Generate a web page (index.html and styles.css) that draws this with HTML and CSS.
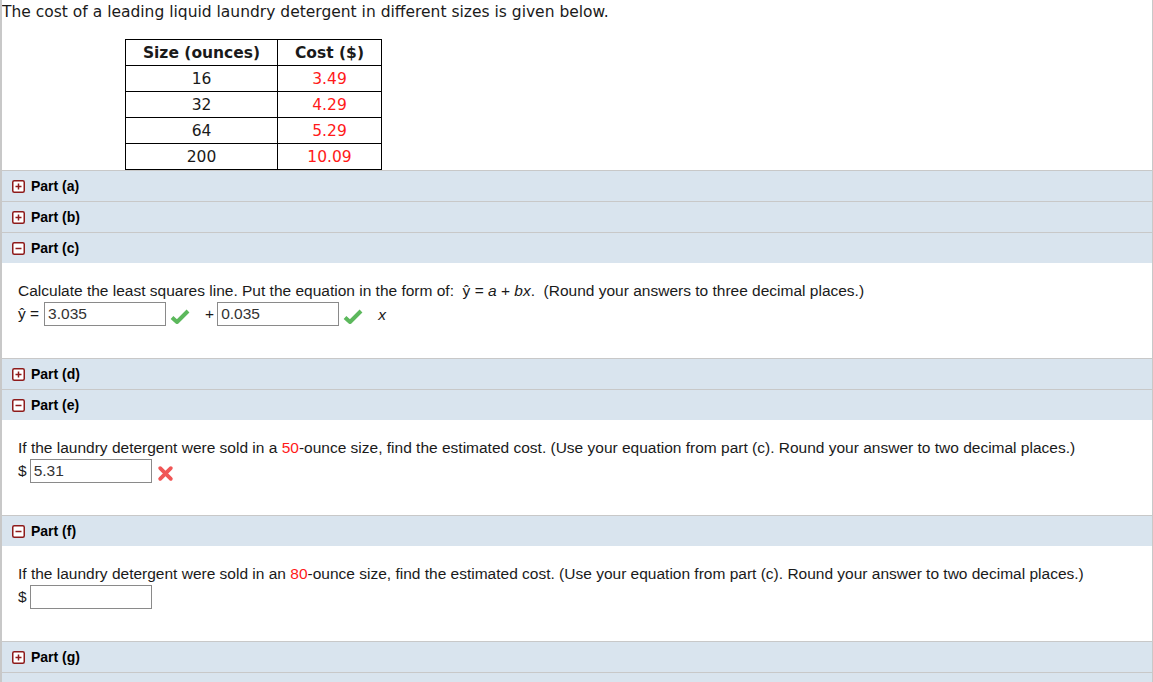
FILE: index.html
```html
<!DOCTYPE html>
<html>
<head>
<meta charset="utf-8">
<link rel="stylesheet" href="styles.css">
</head>
<body>
<div class="page">
  <div class="intro">
    <p class="lead">The cost of a leading liquid laundry detergent in different sizes is given below.</p>
    <table class="data">
      <thead>
        <tr><th class="c1">Size (ounces)</th><th class="c2">Cost ($)</th></tr>
      </thead>
      <tbody>
        <tr><td>16</td><td class="red">3.49</td></tr>
        <tr><td>32</td><td class="red">4.29</td></tr>
        <tr><td>64</td><td class="red">5.29</td></tr>
        <tr><td>200</td><td class="red">10.09</td></tr>
      </tbody>
    </table>
  </div>

  <div class="part-head"><svg class="tog" viewBox="0 0 13 13"><rect x="0.75" y="0.75" width="11.5" height="11.5" rx="1.5" fill="#fff" stroke="#8e1b1b" stroke-width="1.5"/><path d="M3.5 6.5h6M6.5 3.5v6" stroke="#8e1b1b" stroke-width="1.5"/></svg><span>Part (a)</span></div>
  <div class="part-head"><svg class="tog" viewBox="0 0 13 13"><rect x="0.75" y="0.75" width="11.5" height="11.5" rx="1.5" fill="#fff" stroke="#8e1b1b" stroke-width="1.5"/><path d="M3.5 6.5h6M6.5 3.5v6" stroke="#8e1b1b" stroke-width="1.5"/></svg><span>Part (b)</span></div>
  <div class="part-head"><svg class="tog" viewBox="0 0 13 13"><rect x="0.75" y="0.75" width="11.5" height="11.5" rx="1.5" fill="#fff" stroke="#8e1b1b" stroke-width="1.5"/><path d="M3.5 6.5h6" stroke="#8e1b1b" stroke-width="1.5"/></svg><span>Part (c)</span></div>
  <div class="part-body">
    <p class="q">Calculate the least squares line. Put the equation in the form of:&nbsp; ŷ = <i>a</i> + <i>bx</i>.&nbsp; (Round your answers to three decimal places.)</p>
    <div class="ans">
      <span class="lbl">ŷ =</span>
      <span class="box">3.035</span>
      <svg class="check" viewBox="0 0 20 16"><path d="M2 9.5l5 4.5L18 3" fill="none" stroke="#5cb85c" stroke-width="4" stroke-linejoin="round"/></svg>
      <span class="plus">+</span>
      <span class="box">0.035</span>
      <svg class="check" viewBox="0 0 20 16"><path d="M2 9.5l5 4.5L18 3" fill="none" stroke="#5cb85c" stroke-width="4" stroke-linejoin="round"/></svg>
      <i class="xvar">x</i>
    </div>
  </div>
  <div class="part-head"><svg class="tog" viewBox="0 0 13 13"><rect x="0.75" y="0.75" width="11.5" height="11.5" rx="1.5" fill="#fff" stroke="#8e1b1b" stroke-width="1.5"/><path d="M3.5 6.5h6M6.5 3.5v6" stroke="#8e1b1b" stroke-width="1.5"/></svg><span>Part (d)</span></div>
  <div class="part-head"><svg class="tog" viewBox="0 0 13 13"><rect x="0.75" y="0.75" width="11.5" height="11.5" rx="1.5" fill="#fff" stroke="#8e1b1b" stroke-width="1.5"/><path d="M3.5 6.5h6" stroke="#8e1b1b" stroke-width="1.5"/></svg><span>Part (e)</span></div>
  <div class="part-body">
    <p class="q">If the laundry detergent were sold in a <span class="red">50</span>-ounce size, find the estimated cost. (Use your equation from part (c). Round your answer to two decimal places.)</p>
    <div class="ans">
      <span class="lbl cur">$</span>
      <span class="box">5.31</span>
      <svg class="cross" viewBox="0 0 16 16"><path d="M3 3l10 10M13 3L3 13" stroke="#f05656" stroke-width="3.6" stroke-linecap="round"/></svg>
    </div>
  </div>
  <div class="part-head"><svg class="tog" viewBox="0 0 13 13"><rect x="0.75" y="0.75" width="11.5" height="11.5" rx="1.5" fill="#fff" stroke="#8e1b1b" stroke-width="1.5"/><path d="M3.5 6.5h6" stroke="#8e1b1b" stroke-width="1.5"/></svg><span>Part (f)</span></div>
  <div class="part-body">
    <p class="q">If the laundry detergent were sold in an <span class="red">80</span>-ounce size, find the estimated cost. (Use your equation from part (c). Round your answer to two decimal places.)</p>
    <div class="ans">
      <span class="lbl cur">$</span>
      <span class="box"></span>
    </div>
  </div>
  <div class="part-head"><svg class="tog" viewBox="0 0 13 13"><rect x="0.75" y="0.75" width="11.5" height="11.5" rx="1.5" fill="#fff" stroke="#8e1b1b" stroke-width="1.5"/><path d="M3.5 6.5h6M6.5 3.5v6" stroke="#8e1b1b" stroke-width="1.5"/></svg><span>Part (g)</span></div>
  <div class="part-head"><svg class="tog" viewBox="0 0 13 13"><rect x="0.75" y="0.75" width="11.5" height="11.5" rx="1.5" fill="#fff" stroke="#8e1b1b" stroke-width="1.5"/><path d="M3.5 6.5h6M6.5 3.5v6" stroke="#8e1b1b" stroke-width="1.5"/></svg><span>Part (h)</span></div>
</div>
</body>
</html>
```

FILE: styles.css
```css
html, body {
  margin: 0;
  padding: 0;
  background: #fff;
  overflow: hidden;
}
.page {
  width: 1153px;
  height: 682px;
  box-sizing: border-box;
  border-left: 2px solid #c8c8c8;
  border-right: 1px solid #c8c8c8;
  overflow: hidden;
}
.lead {
  margin: 0;
  padding-top: 3px;
  font-family: "DejaVu Sans", Verdana, sans-serif;
  font-size: 15.5px;
  line-height: 18px;
  color: #1a1a1a;
}
.data {
  border-collapse: collapse;
  margin: 18px 0 0 123px;
  font-family: "DejaVu Sans", Verdana, sans-serif;
  font-size: 15.5px;
  color: #1a1a1a;
}
.data th, .data td {
  border: 1px solid #000;
  height: 25px;
  padding: 0;
  text-align: center;
  line-height: 18px;
}
.data th { font-weight: bold; }
.data .c1 { width: 151px; }
.data .c2 { width: 103px; }
.red { color: #ff1a1a; }
.part-head {
  height: 30px;
  border-top: 1px solid #c8c8c8;
  background: #d9e4ee;
  display: flex;
  align-items: center;
  padding-left: 10px;
  font-family: "Liberation Sans", Arial, sans-serif;
  font-size: 14px;
  font-weight: bold;
  color: #000;
}
.tog {
  width: 13px;
  height: 13px;
  margin-right: 6px;
}
.part-body {
  height: 95px;
  box-sizing: border-box;
  padding: 19px 16px 0 16px;
  font-family: "Liberation Sans", Arial, sans-serif;
  font-size: 15.5px;
  color: #1a1a1a;
}
.q {
  margin: 0;
  line-height: 18px;
}
.ans {
  display: flex;
  align-items: center;
  margin-top: 2px;
  height: 24px;
}
.lbl {
  margin-right: 5px;
}
.lbl.cur {
  margin-right: 3px;
}
.box {
  width: 122px;
  height: 24px;
  box-sizing: border-box;
  border: 1px solid #8a8a8a;
  padding: 0 3px;
  line-height: 22px;
  color: #333;
}
.check {
  width: 20px;
  height: 16px;
  margin: 4px 0 0 4px;
}
.plus {
  margin: 0 3px 0 15px;
}
.xvar {
  margin-left: 15px;
  padding-top: 2px;
}
.cross {
  width: 17px;
  height: 17px;
  margin: 4px 0 0 5px;
}
```
